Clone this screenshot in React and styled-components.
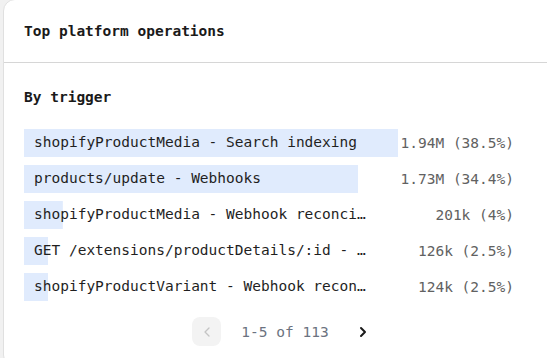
import React from 'react';
import styled, { createGlobalStyle } from 'styled-components';

const GlobalStyle = createGlobalStyle`
  html, body {
    margin: 0;
    padding: 0;
    background: #f1f1f1;
    overflow: hidden;
  }
  body {
    font-family: "DejaVu Sans Mono", "Liberation Mono", monospace;
  }
`;

const Page = styled.div`
  padding-left: 3px;
  width: 600px;
`;

const Card = styled.section`
  width: 564px;
  margin-top: -1px;
  background: #ffffff;
  border: 1px solid #e0e0e0;
  border-radius: 12px;
  box-sizing: border-box;
`;

const Header = styled.header`
  height: 63px;
  display: flex;
  align-items: center;
  padding: 0 20px;
  border-bottom: 1px solid #d6d6d6;
  box-sizing: border-box;
`;

const Title = styled.h2`
  margin: 0;
  font-size: 14.5px;
  font-weight: 700;
  color: #1a1a1a;
`;

const Body = styled.div`
  padding: 24px 20px 20px;
`;

const SubTitle = styled.h3`
  margin: 0;
  height: 20px;
  line-height: 20px;
  font-size: 14.5px;
  font-weight: 700;
  color: #1a1a1a;
`;

const List = styled.ul`
  list-style: none;
  margin: 22px 0 0;
  padding: 0;
  display: flex;
  flex-direction: column;
  gap: 8px;
`;

const Row = styled.li`
  display: grid;
  grid-template-columns: 374px 116px;
  height: 28px;
  align-items: center;
  font-size: 14.5px;
`;

const Label = styled.span`
  height: 28px;
  line-height: 27px;
  padding: 0 29px 0 10px;
  color: #1f1f1f;
  white-space: nowrap;
  overflow: hidden;
  text-overflow: ellipsis;
  background-repeat: no-repeat;
`;

const Value = styled.span`
  text-align: right;
  color: #616161;
  white-space: nowrap;
  line-height: 27px;
`;

const Pager = styled.nav`
  display: flex;
  justify-content: center;
  align-items: center;
  margin-top: 16px;
  gap: 20px;
`;

const PageButton = styled.button`
  width: 29px;
  height: 29px;
  border: none;
  border-radius: 8px;
  padding: 0;
  display: flex;
  align-items: center;
  justify-content: center;
  background: ${(p) => (p.disabled ? '#f3f3f3' : 'transparent')};
  color: ${(p) => (p.disabled ? '#c4c4c4' : '#1a1a1a')};
`;

const PageText = styled.span`
  font-size: 14.5px;
  color: #6b7280;
`;

const Chevron = ({ dir, weight }) => (
  <svg width="10" height="12" viewBox="0 0 10 12" fill="none">
    <path
      d={dir === 'left' ? 'M7 2 L3 6 L7 10' : 'M3 2 L7 6 L3 10'}
      stroke="currentColor"
      strokeWidth={weight}
      strokeLinecap="round"
      strokeLinejoin="round"
    />
  </svg>
);

const rows = [
  { label: 'shopifyProductMedia - Search indexing', value: '1.94M (38.5%)', pct: 38.5 },
  { label: 'products/update - Webhooks', value: '1.73M (34.4%)', pct: 34.4 },
  { label: 'shopifyProductMedia - Webhook reconciliation', value: '201k (4%)', pct: 4 },
  { label: 'GET /extensions/productDetails/:id - Extensions', value: '126k (2.5%)', pct: 2.5 },
  { label: 'shopifyProductVariant - Webhook reconciliation', value: '124k (2.5%)', pct: 2.5 },
];

const max = 38.5;

const App = () => {
  return (
    <>
      <GlobalStyle />
      <Page>
        <Card>
          <Header>
            <Title>Top platform operations</Title>
          </Header>
          <Body>
            <SubTitle>By trigger</SubTitle>
            <List>
              {rows.map((r) => (
                <Row key={r.label}>
                  <Label
                    style={{
                      backgroundImage: 'linear-gradient(#e0ebfd, #e0ebfd)',
                      backgroundSize: `${(r.pct / max) * 100}% 100%`,
                    }}
                  >
                    {r.label}
                  </Label>
                  <Value>{r.value}</Value>
                </Row>
              ))}
            </List>
            <Pager>
              <PageButton disabled aria-label="Previous">
                <Chevron dir="left" weight={1.3} />
              </PageButton>
              <PageText>1-5 of 113</PageText>
              <PageButton aria-label="Next">
                <Chevron dir="right" weight={2} />
              </PageButton>
            </Pager>
          </Body>
        </Card>
      </Page>
    </>
  );
};

export default App;
